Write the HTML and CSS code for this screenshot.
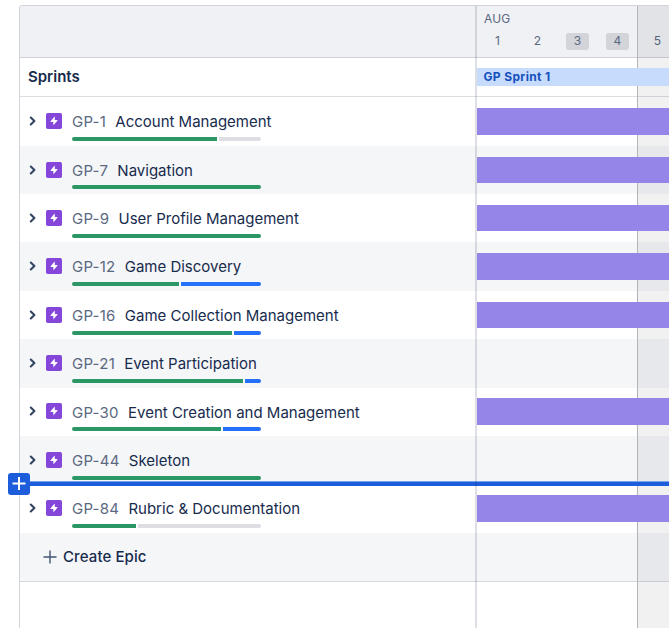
FILE: index.html
```
<!DOCTYPE html>
<html lang="en">
<head>
<meta charset="utf-8">
<title>Roadmap</title>
<link rel="stylesheet" href="styles.css">
</head>
<body>
<svg width="0" height="0" class="defs">
  <symbol id="chevron" viewBox="0 0 8 10"><path d="M1.8 1.5 5.4 5 1.8 8.5" fill="none" stroke="#344563" stroke-width="2.1" stroke-linecap="round" stroke-linejoin="round"/></symbol>
  <symbol id="epic" viewBox="0 0 16 16"><rect width="16" height="16" rx="1.8" fill="#8447d9"/><path d="M8.8 4.2v2.9h2.3c.4 0 .5.3.3.6l-3.5 4.1c-.3.3-.6.1-.6-.2V8.9H4.9c-.4 0-.5-.3-.3-.6L8.2 4c.2-.3.6-.1.6.2Z" fill="#fff"/></symbol>
</svg>
<main class="roadmap">
  <header class="head">
    <div class="side"></div>
    <div class="dates">
      <div class="month">AUG</div>
      <div class="days"><span>1</span><span>2</span><span class="off">3</span><span class="off">4</span><span>5</span></div>
    </div>
  </header>
  <section class="sprints">
    <h2 class="side">Sprints</h2>
    <div class="sprint">GP Sprint 1</div>
  </section>
  <section class="epics">
    <div class="row"><div class="side"><svg class="chev"><use href="#chevron"/></svg><svg class="icon"><use href="#epic"/></svg><div class="epic"><p><span class="key">GP-1</span><span>Account Management</span></p><div class="progress"><i class="done" style="width:145px"></i><i class="todo"></i></div></div></div><div class="bar"></div></div>
    <div class="row"><div class="side"><svg class="chev"><use href="#chevron"/></svg><svg class="icon"><use href="#epic"/></svg><div class="epic"><p><span class="key">GP-7</span><span>Navigation</span></p><div class="progress"><i class="done" style="width:189px"></i></div></div></div><div class="bar"></div></div>
    <div class="row"><div class="side"><svg class="chev"><use href="#chevron"/></svg><svg class="icon"><use href="#epic"/></svg><div class="epic"><p><span class="key">GP-9</span><span>User Profile Management</span></p><div class="progress"><i class="done" style="width:189px"></i></div></div></div><div class="bar"></div></div>
    <div class="row"><div class="side"><svg class="chev"><use href="#chevron"/></svg><svg class="icon"><use href="#epic"/></svg><div class="epic"><p><span class="key">GP-12</span><span>Game Discovery</span></p><div class="progress"><i class="done" style="width:107px"></i><i class="active"></i></div></div></div><div class="bar"></div></div>
    <div class="row"><div class="side"><svg class="chev"><use href="#chevron"/></svg><svg class="icon"><use href="#epic"/></svg><div class="epic"><p><span class="key">GP-16</span><span>Game Collection Management</span></p><div class="progress"><i class="done" style="width:160px"></i><i class="active"></i></div></div></div><div class="bar"></div></div>
    <div class="row"><div class="side"><svg class="chev"><use href="#chevron"/></svg><svg class="icon"><use href="#epic"/></svg><div class="epic"><p><span class="key">GP-21</span><span>Event Participation</span></p><div class="progress"><i class="done" style="width:171px"></i><i class="active"></i></div></div></div></div>
    <div class="row"><div class="side"><svg class="chev"><use href="#chevron"/></svg><svg class="icon"><use href="#epic"/></svg><div class="epic"><p><span class="key">GP-30</span><span>Event Creation and Management</span></p><div class="progress"><i class="done" style="width:149px"></i><i class="active"></i></div></div></div><div class="bar"></div></div>
    <div class="row"><div class="side"><svg class="chev"><use href="#chevron"/></svg><svg class="icon"><use href="#epic"/></svg><div class="epic"><p><span class="key">GP-44</span><span>Skeleton</span></p><div class="progress"><i class="done" style="width:189px"></i></div></div></div></div>
    <div class="row"><div class="side"><svg class="chev"><use href="#chevron"/></svg><svg class="icon"><use href="#epic"/></svg><div class="epic"><p><span class="key">GP-84</span><span>Rubric &amp; Documentation</span></p><div class="progress"><i class="done" style="width:64px"></i><i class="todo"></i></div></div></div><div class="bar"></div></div>
    <div class="row create"><svg class="plus" viewBox="0 0 14 14"><path d="M7 .5v13M.5 7h13" stroke="#44546f" stroke-width="1.4"/></svg><span>Create Epic</span></div>
  </section>
  <div class="week"></div>
  <div class="insert"><svg class="add" viewBox="0 0 22 22"><rect width="22" height="22" rx="3" fill="#1d5ddb"/><path d="M11 4v13M4.5 10.5h13" stroke="#fff" stroke-width="2"/></svg></div>
  <div class="divider"></div>
</main>
</body>
</html>
```
FILE: styles.css
```
* { box-sizing: border-box; }
body { margin: 0; background: #fff; color: #172b4d; font-family: Inter, "Liberation Sans", sans-serif; overflow: hidden; }
h2, p { margin: 0; }
.defs { position: absolute; }
.roadmap { position: relative; margin: 5px 0 0 19px; height: 623px; border: 1px solid #d3d5db; border-right: 0; border-bottom: 0; border-radius: 3px 0 0 0; }
.side { width: 457px; flex: none; }
.head { display: flex; height: 52px; background: #f0f1f4; border-bottom: 1px solid #cfd1d8; border-radius: 2px 0 0 0; }
.dates { flex: 1; color: #5a6881; overflow: hidden; }
.month { padding: 5px 0 0 7px; font-size: 12px; line-height: 16px; letter-spacing: .1px; }
.days { display: flex; gap: 17px; padding: 6px 0 0 9px; font-size: 12px; line-height: 16px; }
.days span { width: 23px; height: 17px; flex: none; text-align: center; border-radius: 3px; }
.days .off { background: #d2d4da; }
.sprints { display: flex; height: 39px; align-items: center; border-bottom: 1px solid #dcdee4; }
.sprints h2 { padding-left: 8px; font-size: 15px; line-height: 20px; font-weight: 600; }
.sprint { flex: 1; height: 18px; padding-left: 6.5px; background: #c7dcfc; color: #1550be; font-size: 12px; line-height: 18px; font-weight: 700; letter-spacing: .36px; position: relative; z-index: 1; }
.epics { padding-top: .4px; border-bottom: 1px solid #d5d8de; height: 485px; }
.row { display: flex; height: 48.37px; }
.row:nth-child(even) { background: #f5f6f8; }
.row .side { display: flex; }
.chev { width: 8px; height: 10px; margin: 18.8px 0 0 9px; }
.icon { width: 16px; height: 16px; margin: 15.8px 0 0 9px; }
.epic { padding: 15px 0 0 10px; }
.epic p { display: flex; gap: 9.2px; height: 24px; font-size: 15px; line-height: 20px; white-space: nowrap; }
.key { color: #5a6881; letter-spacing: .25px; }
.progress { display: flex; gap: 2px; width: 189px; height: 4px; margin-top: .7px; border-radius: 2px; overflow: hidden; }
.progress i { flex: 1; }
.progress .done { flex: none; background: #2a9764; }
.progress .active { background: #2470f8; }
.progress .todo { background: #dddee3; }
.bar { flex: 1; height: 26.5px; margin-top: 10.8px; background: #9585e8; position: relative; z-index: 1; }
.create { align-items: center; padding-left: 23px; gap: 6px; font-size: 15px; font-weight: 500; letter-spacing: .1px; }
.plus { width: 14px; height: 14px; }
.week { position: absolute; top: 0; bottom: 0; right: 0; width: 32px; background: rgba(9, 13, 34, .058); border-left: 1px solid #b2b4b8; }
.insert { position: absolute; z-index: 2; left: -12px; right: 0; top: 467px; height: 22px; display: flex; align-items: flex-start; }
.insert::after { content: ""; flex: 1; height: 4px; margin-top: 8px; background: #1d5ddb; border-top: 1px solid #79a3ed; }
.add { width: 22px; height: 22px; }
.divider { position: absolute; z-index: 3; left: 455px; top: 0; bottom: 0; width: 2px; background: rgba(9, 30, 66, .14); }
```
